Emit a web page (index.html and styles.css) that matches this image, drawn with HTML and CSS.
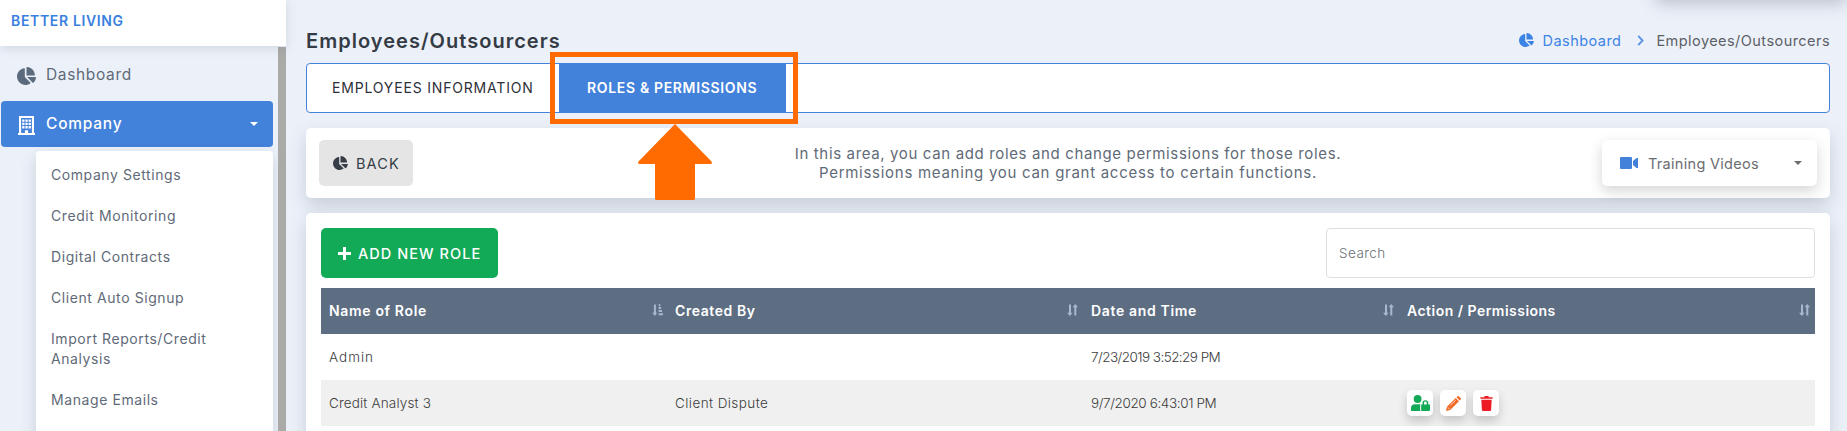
FILE: index.html
```html
<!DOCTYPE html>
<html lang="en">
<head>
<meta charset="utf-8">
<title>Employees/Outsourcers</title>
<link rel="stylesheet" href="styles.css">
</head>
<body>
<svg class="defs" aria-hidden="true">
  <symbol id="pie" viewBox="0 0 544 512"><path d="M527.79 288H290.5l158.03 158.03c6.04 6.04 15.98 6.53 22.19.68 38.7-36.46 65.32-85.61 73.13-140.86 1.34-9.46-6.51-17.85-16.06-17.85zm-15.83-64.8C503.72 103.74 408.26 8.28 288.8.04 279.68-.59 272 7.1 272 16.24V240h223.77c9.14 0 16.82-7.68 16.19-16.8zM224 288V50.71c0-9.55-8.39-17.4-17.84-16.06C86.99 51.49-4.1 155.6.14 280.37 4.5 408.51 114.83 513.59 243.03 511.98c50.4-.63 96.97-16.87 135.26-44.03 7.9-5.6 8.42-17.23 1.57-24.08L224 288z"/></symbol>
  <symbol id="sort" viewBox="0 0 11 12"><path d="M2 .5h2v8.3h1.6L2.9 12 0 8.8h2zM7.3 11.5h2V3.3H11L8.3 0 5.6 3.3h1.7z"/></symbol>
  <symbol id="sort-asc" viewBox="0 0 11 12"><path d="M1.9 .5h2v8.3h1.4L2.9 12 .2 8.8h1.7zM6.6 .3h1.8v1.9H6.6zM6.6 3.1h2.6V5H6.6zM6.6 6h3.4v1.9H6.6zM6.6 9.2H11v2H6.6z"/></symbol>
</svg>

<div class="app">
  <aside class="sidebar">
    <header class="brand">BETTER LIVING</header>
    <div class="side-scroll">
      <nav class="menu">
        <a class="item"><svg class="icon-pie-lg"><use href="#pie"/></svg><span>Dashboard</span></a>
        <a class="item active">
          <svg class="icon-building" viewBox="0 0 17 19"><path fill-rule="evenodd" d="M1 0h15v17h1v2H0v-2h1zM3.100 2V17h3.800v-2.800h3.200V17h3.800V2zM4.200 3.500h2.300v2.300H4.200zM7.400 3.500h2.300v2.300H7.400zM10.600 3.500h2.300v2.300h-2.300zM4.200 6.800h2.300v2.300H4.200zM7.400 6.800h2.300v2.300H7.400zM10.600 6.800h2.300v2.300h-2.300zM4.200 10.100h2.300v2.300H4.200zM7.400 10.100h2.300v2.300H7.400zM10.600 10.100h2.300v2.300h-2.300z"/></svg>
          <span>Company</span><i class="caret"></i>
        </a>
        <div class="submenu">
          <a>Company Settings</a>
          <a>Credit Monitoring</a>
          <a>Digital Contracts</a>
          <a>Client Auto Signup</a>
          <a>Import Reports/Credit Analysis</a>
          <a>Manage Emails</a>
        </div>
      </nav>
      <div class="scrollbar"></div>
    </div>
  </aside>

  <main class="main">
    <div class="top-panel"></div>
    <div class="head">
      <h1>Employees/Outsourcers</h1>
      <div class="crumbs">
        <svg class="icon-pie"><use href="#pie"/></svg>
        <a>Dashboard</a>
        <svg class="chevron" viewBox="0 0 7 11"><path d="M1.200 .8 5.600 5.500 1.200 10.200"/></svg>
        <span>Employees/Outsourcers</span>
      </div>
    </div>

    <div class="tabs">
      <a class="tab">EMPLOYEES INFORMATION</a>
      <a class="tab selected">ROLES &amp; PERMISSIONS
        <span class="marker"></span>
        <svg class="arrow" viewBox="0 0 74 76"><path d="M37 0 73.500 37.500Q75 40 72 40H57V74.500Q57 76 55.500 76H18.500Q17 76 17 74.500V40H2Q-1 40 .5 37.500z"/></svg>
      </a>
    </div>

    <section class="card intro">
      <button class="back"><svg class="icon-pie"><use href="#pie"/></svg>BACK</button>
      <p>In this area, you can add roles and change permissions for those roles.<br><span>Permissions meaning you can grant access to certain functions.</span></p>
      <button class="videos">
        <svg class="icon-video" viewBox="0 0 18 12"><path d="M1 0h10q1 0 1 1v10q0 1-1 1H1q-1 0-1-1V1q0-1 1-1zM13 4l3.500-3H18v10h-1.500L13 8z"/></svg>
        <span>Training Videos</span><i class="caret"></i>
      </button>
    </section>

    <section class="card roles">
      <div class="toolbar">
        <button class="add"><svg viewBox="0 0 13 13"><path d="M5 0h3v5h5v3H8v5H5V8H0V5h5z"/></svg>ADD NEW ROLE</button>
        <div class="search">Search</div>
      </div>
      <div class="row thead">
        <div><span class="h-name">Name of Role</span><svg><use href="#sort-asc"/></svg></div>
        <div><span class="h-by">Created By</span><svg><use href="#sort"/></svg></div>
        <div><span class="h-date">Date and Time</span><svg><use href="#sort"/></svg></div>
        <div><span class="h-act">Action / Permissions</span><svg><use href="#sort"/></svg></div>
      </div>
      <div class="row">
        <div class="admin">Admin</div><div></div><div class="date">7/23/2019 3:52:29 PM</div><div></div>
      </div>
      <div class="row odd">
        <div class="analyst">Credit Analyst 3</div><div class="by">Client Dispute</div><div class="date date-b">9/7/2020 6:43:01 PM</div>
        <div class="actions">
          <a class="act green"><svg viewBox="0 0 19 16"><circle cx="6.600" cy="4" r="3.900"/><path d="M0 16v-2.800Q0 9.200 4 9.200h5.200V16z"/><path fill-rule="evenodd" d="M10.200 9.500h1.300V8q0-2.800 2.900-2.800T17.300 8v1.500H19V15q0 1-1 1h-7.800zM13 9.500h2.800V8q0-1.400-1.400-1.400T13 8z"/></svg></a>
          <a class="act orange"><svg viewBox="0 0 16 16"><path d="M11.200 1.300 12.300.3q.8-.6 1.600.1l1.800 1.800q.6.700 0 1.500l-1.100 1.100zM10.300 2.200l3.500 3.500-9.300 9.300L0 16l1-4.500z"/><path class="cut" d="M4.800 9.700 10.300 4.400M2 12.200l1.900 1.900"/></svg></a>
          <a class="act red"><svg viewBox="0 0 13 16"><path d="M0 1.200h4L4.600 0h3.800L9 1.200h4V3H0zM1 4h11l-.6 10.800Q11.300 16 10.200 16H2.800q-1.100 0-1.200-1.200z"/></svg></a>
        </div>
      </div>
    </section>
  </main>
</div>
</body>
</html>
```
FILE: styles.css
```css
* { box-sizing: border-box; }
body {
  margin: 0;
  background: #ecf1f9;
  font-family: Inter, "Liberation Sans", sans-serif;
  font-size: 14px;
  color: #5f6a78;
  overflow: hidden;
}
svg { flex: none; fill: currentColor; }
button { border: 0; font: inherit; color: inherit; text-align: left; }
.defs { display: none; }
.app { display: flex; height: 431px; overflow: hidden; }

/* Sidebar */
.sidebar { width: 286px; flex: none; display: flex; flex-direction: column; }
.brand {
  position: relative;
  flex: none;
  height: 46px;
  padding: 11px 0 0 11px;
  line-height: 20px;
  background: #fff;
  color: #3a80e0;
  font-weight: 600;
  letter-spacing: .65px;
  box-shadow: 0 2px 10px rgba(60, 75, 95, .16);
}
.side-scroll { display: flex; justify-content: space-between; flex: 1; min-height: 0; padding-top: 1px; }
.menu { width: 273px; padding: 5px 0 0 1px; }
.scrollbar { width: 8px; background: #aaaaa8; }
.item {
  display: flex;
  align-items: center;
  height: 46px;
  border-radius: 4px;
  font-size: 15.5px;
  letter-spacing: .65px;
}
.item:first-child { height: 45px; margin-bottom: 4px; }
.icon-pie-lg { width: 19px; height: 18px; margin: 2px 10px 0 16px; color: #5c6a7e; }
.item.active { background: #4382da; color: #fff; font-weight: 500; letter-spacing: .76px; }
.item.active span { margin-top: -1px; }
.icon-building { width: 17px; height: 19px; margin: 3px 11px 0 17px; }
.caret { width: 0; height: 0; border: 4px solid transparent; border-top-color: currentColor; border-bottom: 0; }
.item .caret { margin: 0 15px 0 auto; }
.submenu {
  width: 237px;
  height: 300px;
  margin: 4px 0 0 35px;
  padding: 3px 15px 0;
  background: #fff;
  border-radius: 4px;
  box-shadow: 0 6px 16px rgba(60, 75, 95, .2);
}
.submenu a { display: block; padding: 10.5px 20px 10.5px 0; line-height: 20px; letter-spacing: .58px; }

/* Page head */
.main { position: relative; flex: 1; padding: 0 17px 0 20px; }
.top-panel {
  position: absolute;
  top: -30px;
  right: 0;
  width: 192px;
  height: 30px;
  border-radius: 6px;
  box-shadow: 0 4px 16px rgba(60, 75, 95, .28);
}
.head { display: flex; align-items: center; justify-content: space-between; height: 63px; padding-top: 19px; }
h1 { margin: 0; font-size: 20px; font-weight: 600; line-height: 24px; letter-spacing: 1.03px; color: #343b45; }
.crumbs { display: flex; align-items: center; margin-top: -2px; font-size: 14.5px; letter-spacing: .45px; color: #5c6066; }
.crumbs a { margin-left: 9px; color: #3c83e6; }
.icon-pie { width: 15px; height: 14px; }
.crumbs .icon-pie { color: #3c83e6; }
.chevron { width: 7px; height: 11px; margin: 0 12px 0 16px; fill: none; stroke: #5b94e4; stroke-width: 1.900; }

/* Tabs */
.tabs { display: flex; height: 50px; background: #fff; border: 1px solid #4382da; border-radius: 4px; color: #2d3038; }
.tab { display: flex; align-items: center; width: 252px; padding: 0 0 1px 25px; letter-spacing: .82px; white-space: nowrap; }
.tab.selected {
  position: relative;
  width: 227px;
  padding-left: 28px;
  background: #4382da;
  color: #fff;
  font-weight: 600;
  letter-spacing: .66px;
}
.marker { position: absolute; left: -9px; top: -12px; width: 248px; height: 72px; border: 5px solid #ff6b00; }
.arrow { position: absolute; left: 79px; top: 60px; width: 74px; height: 76px; color: #ff6b00; }

/* Cards */
.card { background: #fff; border-radius: 5px; box-shadow: 0 8px 18px rgba(50, 65, 85, .2); }
.intro { display: flex; align-items: center; justify-content: space-between; height: 70px; margin-top: 15px; padding: 0 13px; }
.back {
  display: flex;
  align-items: center;
  gap: 8px;
  width: 94px;
  height: 46px;
  padding: 0 0 0 14px;
  border-radius: 5px;
  background: #e5e5e5;
  color: #363d46;
  font-size: 14.5px;
  letter-spacing: 1.100px;
}
.intro p { margin: 0 0 0 121px; font-size: 15px; line-height: 19px; letter-spacing: .64px; text-align: center; }
.intro p span { letter-spacing: .72px; }
.videos {
  display: flex;
  align-items: center;
  width: 215px;
  height: 46px;
  padding: 0 15px 0 18px;
  border-radius: 5px;
  background: #fff;
  box-shadow: 0 5px 14px rgba(0, 0, 0, .17);
  color: #6a6d70;
  font-size: 14.5px;
  letter-spacing: .3px;
}
.icon-video { width: 18px; height: 12px; margin-right: 10px; color: #4382da; }
.videos .caret { margin-left: auto; }

/* Roles table */
.roles { height: 300px; margin-top: 15px; padding: 15px; }
.toolbar { display: flex; justify-content: space-between; margin-bottom: 10px; }
.add {
  display: flex;
  align-items: center;
  width: 177px;
  height: 50px;
  padding: 0 0 0 17px;
  border-radius: 5px;
  background: #12a957;
  color: #fff;
  font-size: 14.5px;
  font-weight: 500;
  letter-spacing: 1.050px;
}
.add svg { width: 13px; height: 13px; margin-right: 7px; }
.search {
  width: 489px;
  height: 50px;
  padding-left: 12px;
  border: 1px solid #dfdfdf;
  border-radius: 4px;
  line-height: 48px;
  font-size: 13.5px;
  font-weight: 300;
  letter-spacing: .45px;
  color: #6a7077;
}
.row {
  display: grid;
  grid-template-columns: 346px 416px 316px 416px;
  align-items: center;
  height: 46px;
  font-size: 13.5px;
  font-weight: 300;
  color: #3c3c3c;
}
.row > div { padding-left: 8px; }
.thead { background: #5d6d82; color: #fff; font-size: 14px; font-weight: 600; }
.thead > div { display: flex; align-items: center; justify-content: space-between; padding-right: 5px; }
.thead > div:first-child { padding-right: 4px; }
.thead span { margin-top: -1px; }
.thead svg { width: 11px; height: 12px; margin-bottom: 2px; color: #a9b8cd; }
.h-name, .h-date { letter-spacing: .66px; }
.h-by { letter-spacing: .58px; }
.h-act { letter-spacing: .48px; }
.odd { background: #f0f0f0; }
.admin { letter-spacing: 1px; }
.analyst { letter-spacing: .16px; }
.by { letter-spacing: .42px; }
.date { letter-spacing: -.55px; }
.date-b { letter-spacing: -.38px; }
.actions { display: flex; gap: 7px; }
.act {
  display: flex;
  align-items: center;
  justify-content: center;
  width: 26px;
  height: 26px;
  border-radius: 5px;
  background: #fff;
  box-shadow: 0 5px 10px rgba(0, 0, 0, .18);
}
.green { color: #12a957; }
.orange { color: #f06a28; }
.red { color: #ed1c24; }
.green svg { width: 19px; height: 16px; }
.orange svg { width: 15px; height: 15px; }
.red svg { width: 13px; height: 15px; }
.cut { fill: none; stroke: #fff; stroke-width: .8; }
```
